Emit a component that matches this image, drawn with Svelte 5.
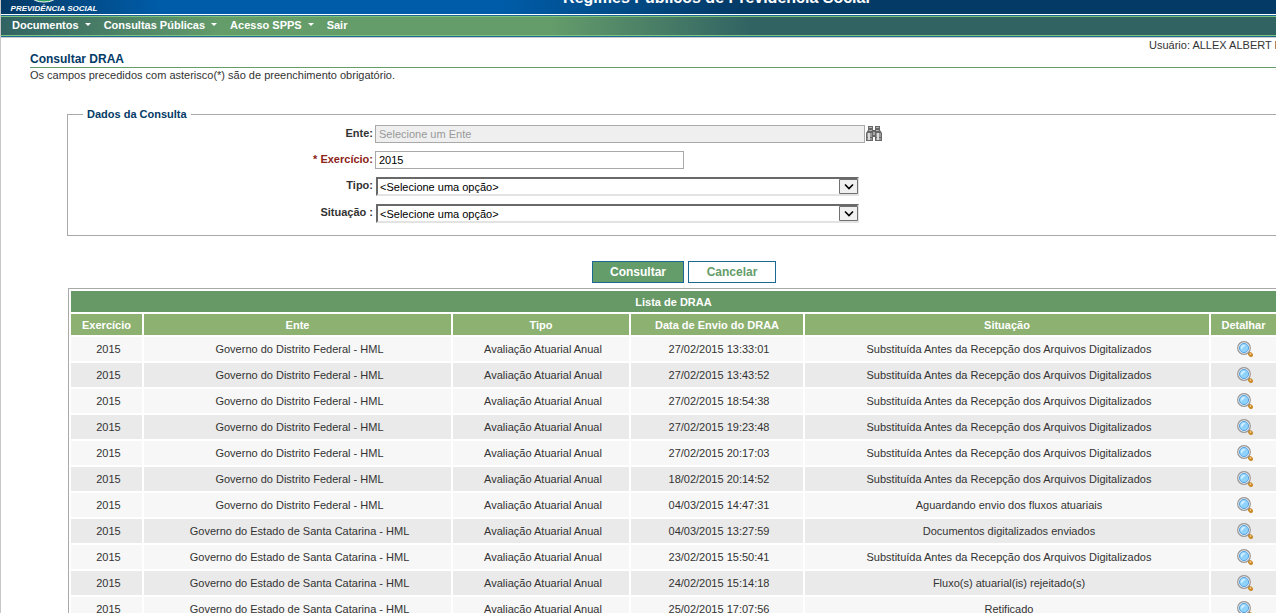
<script lang="ts">
	type Draa = {
		exercicio: number;
		ente: string;
		tipo: string;
		envio: string;
		situacao: string;
	};

	const menu = [
		{ label: 'Documentos', sub: true },
		{ label: 'Consultas Públicas', sub: true },
		{ label: 'Acesso SPPS', sub: true },
		{ label: 'Sair', sub: false }
	];

	const DF = 'Governo do Distrito Federal - HML';
	const SC = 'Governo do Estado de Santa Catarina - HML';
	const SUBST = 'Substituída Antes da Recepção dos Arquivos Digitalizados';

	function draa(ente: string, envio: string, situacao: string): Draa {
		return { exercicio: 2015, ente, tipo: 'Avaliação Atuarial Anual', envio, situacao };
	}

	const lista = [
		draa(DF, '27/02/2015 13:33:01', SUBST),
		draa(DF, '27/02/2015 13:43:52', SUBST),
		draa(DF, '27/02/2015 18:54:38', SUBST),
		draa(DF, '27/02/2015 19:23:48', SUBST),
		draa(DF, '27/02/2015 20:17:03', SUBST),
		draa(DF, '18/02/2015 20:14:52', SUBST),
		draa(DF, '04/03/2015 14:47:31', 'Aguardando envio dos fluxos atuariais'),
		draa(SC, '04/03/2015 13:27:59', 'Documentos digitalizados enviados'),
		draa(SC, '23/02/2015 15:50:41', SUBST),
		draa(SC, '24/02/2015 15:14:18', 'Fluxo(s) atuarial(is) rejeitado(s)'),
		draa(SC, '25/02/2015 17:07:56', 'Retificado')
	];

	let exercicio = $state('2015');
	let tipo = $state('');
	let situacao = $state('');

	function cancelar() {
		exercicio = '';
		tipo = '';
		situacao = '';
	}
</script>

<svelte:head><title>Consultar DRAA</title></svelte:head>

{#snippet chevron()}
	<svg width="19" height="15" viewBox="0 0 19 15" aria-hidden="true">
		<path d="M.5 .5h18v14H.5z" fill="#f0f0f0" stroke="#707070" />
		<path d="M6 5.500l4 4 4-4" fill="none" stroke="#000" stroke-width="1.600" />
	</svg>
{/snippet}

<div class="page">
	<header class="banner">
		<div class="brand">
			<svg width="40" height="3" viewBox="0 0 40 3" aria-hidden="true">
				<ellipse cx="20" cy="-3" rx="12" ry="5" fill="#2fa15c" stroke="#fff" />
			</svg>
			<span>PREVIDÊNCIA SOCIAL</span>
		</div>
		<div class="system">Regimes Públicos de Previdência Social</div>
	</header>

	<nav class="menu">
		{#each menu as item}
			<a href="#{item.label}">{item.label}{#if item.sub}<i class="arrow"></i>{/if}</a>
		{/each}
	</nav>

	<main>
		<div class="user">Usuário: ALLEX ALBERT P</div>
		<h1>Consultar DRAA</h1>
		<p class="hint">Os campos precedidos com asterisco(*) são de preenchimento obrigatório.</p>

		<form onsubmit={(e) => e.preventDefault()}>
			<fieldset>
				<legend>Dados da Consulta</legend>
				<div class="fields">
					<label for="ente">Ente:</label>
					<div class="control">
						<input id="ente" class="wide" type="text" placeholder="Selecione um Ente" disabled />
						<button type="button" class="icon" aria-label="Pesquisar ente">
							<svg width="16" height="16" viewBox="0 0 16 16">
								<path d="M2 0h5v4h2V0h5v4l2 3v8H9v-4H7v4H0V7l2-3z" fill="#686868" />
								<path d="M3 1h3v1H3zM10 1h3v1h-3zM3 4h3v1H3zM10 4h3v1h-3z" fill="#b5b5b5" />
								<path d="M1 7h5v4H1zM10 7h5v4h-5zM1 12h5v2H1zM10 12h5v2h-5z" fill="#999" />
								<path d="M2 7h2v7H2zM11 7h2v7h-2z" fill="#dcdcdc" />
								<path d="M7 6h2v3H7z" fill="#aaa" />
							</svg>
						</button>
					</div>
					<label for="exercicio" class="required">* Exercício:</label>
					<div class="control">
						<input id="exercicio" type="text" bind:value={exercicio} />
					</div>
					<label for="tipo">Tipo:</label>
					<div class="control">
						<div class="select">
							<select id="tipo" bind:value={tipo}>
								<option value="">&lt;Selecione uma opção&gt;</option>
							</select>
							{@render chevron()}
						</div>
					</div>
					<label for="situacao">Situação :</label>
					<div class="control">
						<div class="select">
							<select id="situacao" bind:value={situacao}>
								<option value="">&lt;Selecione uma opção&gt;</option>
							</select>
							{@render chevron()}
						</div>
					</div>
				</div>
			</fieldset>
			<div class="actions">
				<button type="submit" class="btn primary">Consultar</button>
				<button type="button" class="btn" onclick={cancelar}>Cancelar</button>
			</div>
		</form>

		<table>
			<colgroup>
				<col class="c-exercicio" />
				<col class="c-ente" />
				<col class="c-tipo" />
				<col class="c-envio" />
				<col />
				<col class="c-detalhar" />
			</colgroup>
			<thead>
				<tr><th class="title" colspan="6">Lista de DRAA</th></tr>
				<tr>
					<th>Exercício</th>
					<th>Ente</th>
					<th>Tipo</th>
					<th>Data de Envio do DRAA</th>
					<th>Situação</th>
					<th>Detalhar</th>
				</tr>
			</thead>
			<tbody>
				{#each lista as d}
					<tr>
						<td>{d.exercicio}</td>
						<td>{d.ente}</td>
						<td>{d.tipo}</td>
						<td>{d.envio}</td>
						<td>{d.situacao}</td>
						<td>
							<button type="button" class="icon" aria-label="Detalhar">
								<svg width="16" height="16" viewBox="0 0 16 16">
									<path d="M11 11l2 2" stroke="#888" stroke-width="2" />
									<path d="M13 13l1 1" stroke="#c98a2b" stroke-width="4" stroke-linecap="round" />
									<path d="M13 12.500l1 1" stroke="#ffd68a" stroke-width="1.500" />
									<circle cx="7" cy="7" r="6.300" fill="#fff" stroke="#949494" stroke-width="1.200" />
									<circle cx="7" cy="7" r="4.600" fill="#8fd3fc" stroke="#5a9fdc" />
									<path d="M4 8.500a3.500 3.500 0 0 1 4.500-4.500z" fill="#d4efff" />
								</svg>
							</button>
						</td>
					</tr>
				{/each}
			</tbody>
		</table>
	</main>
</div>

<style>
	:global(body) { background: #fff; overflow: hidden; }

	.page {
		border-left: 1px solid #c8c8c8;
		font: 11px/14px "Liberation Sans", Arial, sans-serif;
		color: #333;
	}

	.banner {
		display: flex;
		height: 14px;
		align-items: flex-end;
		overflow: hidden;
		background: linear-gradient(90deg, #043a66 0, #005ca8 160px, #005ca8 500px, #043a66 740px);
		color: #fff;
	}
	.brand {
		display: flex;
		flex-direction: column;
		align-items: center;
		width: 106px;
		font: italic bold 8px/11px "Liberation Sans", Arial, sans-serif;
		white-space: nowrap;
	}
	.brand svg { margin-left: -20px; }
	.system {
		flex: 1;
		padding-left: 50px;
		margin-bottom: 7px;
		font-size: 16px;
		line-height: 18px;
		font-weight: bold;
		text-align: center;
	}

	.menu {
		display: flex;
		gap: 13px;
		margin-top: 1px;
		padding: 0 11px 2px;
		border-top: 1px solid #1c6a94;
		border-bottom: 1px solid #1c6a94;
		box-shadow: inset 0 1px #7cc47c, inset 0 -1px #7cc47c, 0 1px #ccc;
		background: linear-gradient(90deg, #316363 0, #649c6a 220px, #649c6a 550px, #316363 750px);
		line-height: 18px;
		font-weight: bold;
	}
	.menu a { color: #fff; text-decoration: none; }
	.arrow {
		display: inline-block;
		margin-left: 6px;
		border: 3px solid transparent;
		border-top-color: #fff;
		border-bottom: 0;
		vertical-align: 3px;
	}

	main { padding: 1px 0 0 29px; }
	.user { width: 127px; margin-left: auto; overflow: hidden; white-space: nowrap; }
	h1 {
		margin: 0;
		border-bottom: 1px solid #649c6a;
		font-size: 12px;
		line-height: 15px;
		color: #043a66;
	}
	.hint { margin: 0; }

	fieldset {
		margin: 25px -2px 0 37px;
		padding: 0 0 12px;
		border: 1px solid #a9a9a9;
	}
	legend {
		margin-left: 15px;
		padding: 0 4px;
		font-weight: bold;
		color: #043a66;
	}
	.fields {
		display: grid;
		grid-template-columns: 305px 1fr;
		column-gap: 2px;
		row-gap: 8px;
		padding-top: 4px;
	}
	label { font-weight: bold; text-align: right; line-height: 16px; }
	.required { color: #8b2318; }
	.control { display: flex; align-items: center; gap: 1px; }
	input {
		box-sizing: border-box;
		width: 309px;
		height: 18px;
		padding: 0 3px;
		border: 1px solid #a9a9a9;
		font: 11px "Liberation Sans", Arial, sans-serif;
		color: #000;
	}
	.wide { width: 490px; background: #efefef; }
	input::placeholder { color: #999; }
	.icon { display: block; padding: 0; border: 0; background: none; cursor: pointer; }
	.icon svg { display: block; }
	.select { position: relative; width: 483px; margin-left: 1px; }
	select {
		display: block;
		appearance: none;
		width: 100%;
		height: 19px;
		padding: 0 2px;
		border: 2px solid #e3e3e3;
		border-top-color: #696969;
		border-left-color: #696969;
		border-radius: 0;
		background: #fff;
		font: 11px "Liberation Sans", Arial, sans-serif;
		color: #000;
	}
	.select svg { position: absolute; top: 2px; right: 1px; pointer-events: none; }

	.actions { display: flex; justify-content: center; gap: 4px; margin: 25px 0 5px 62px; }
	.btn {
		width: 88px;
		height: 22px;
		padding: 0;
		border: 1px solid #1c6a94;
		background: #fff;
		font: bold 12px "Liberation Sans", Arial, sans-serif;
		color: #649c6a;
	}
	.btn.primary { width: 92px; background: #649c6a; color: #fff; }

	table {
		width: calc(100% - 35px);
		margin-left: 38px;
		table-layout: fixed;
		border: 1px solid #a9a9a9;
		border-spacing: 2px;
		border-collapse: separate;
		text-align: center;
	}
	.c-exercicio { width: 71px; }
	.c-ente { width: 307px; }
	.c-tipo { width: 176px; }
	.c-envio { width: 172px; }
	.c-detalhar { width: 65px; }
	th { height: 21px; padding: 0; background: #8cb170; color: #fff; }
	th.title { background: #669966; }
	td { height: 24px; padding: 0 0 0 4px; background: #f7f7f7; }
	tr:nth-child(even) td { background: #eaeaea; }
	td .icon { margin: 0 auto; }
</style>
